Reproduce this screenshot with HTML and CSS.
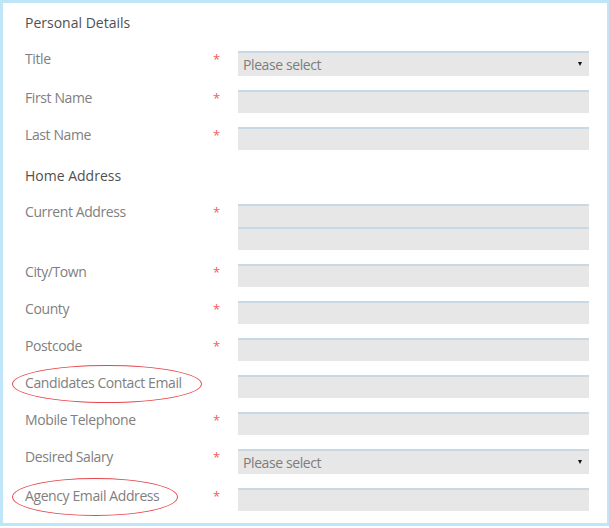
FILE: index.html
```html
<!DOCTYPE html>
<html lang="en">
<head>
    <meta charset="UTF-8">
    <meta name="viewport" content="width=device-width, initial-scale=1.0">
    <title>Candidate Registration</title>
    <link rel="stylesheet" href="styles.css">
</head>
<body>
<div class="panel">
    <h3 class="section_title">Personal Details</h3>
    <div class="field">
        <label class="field_label">Title</label>
        <span class="req">*</span>
        <div class="select_wrap">
            <select class="control">
                <option>Please select</option>
                <option>Mr</option>
                <option>Mrs</option>
                <option>Miss</option>
                <option>Ms</option>
            </select>
        </div>
    </div>
    <div class="field">
        <label class="field_label">First Name</label>
        <span class="req">*</span>
        <input type="text" class="control">
    </div>
    <div class="field">
        <label class="field_label">Last Name</label>
        <span class="req">*</span>
        <input type="text" class="control">
    </div>

    <h3 class="section_title second">Home Address</h3>
    <div class="field">
        <label class="field_label">Current Address</label>
        <span class="req">*</span>
        <div class="control_stack">
            <input type="text" class="control">
            <input type="text" class="control">
        </div>
    </div>
    <div class="field">
        <label class="field_label">City/Town</label>
        <span class="req">*</span>
        <input type="text" class="control">
    </div>
    <div class="field">
        <label class="field_label">County</label>
        <span class="req">*</span>
        <input type="text" class="control">
    </div>
    <div class="field">
        <label class="field_label">Postcode</label>
        <span class="req">*</span>
        <input type="text" class="control">
    </div>
    <div class="field">
        <label class="field_label circled">Candidates Contact Email<span class="ring ring_contact"></span></label>
        <span class="req"></span>
        <input type="email" class="control">
    </div>
    <div class="field">
        <label class="field_label">Mobile Telephone</label>
        <span class="req">*</span>
        <input type="tel" class="control">
    </div>
    <div class="field">
        <label class="field_label">Desired Salary</label>
        <span class="req">*</span>
        <div class="select_wrap">
            <select class="control">
                <option>Please select</option>
                <option>Under £20,000</option>
                <option>£20,000 - £30,000</option>
                <option>£30,000 - £40,000</option>
                <option>Over £40,000</option>
            </select>
        </div>
    </div>
    <div class="field last">
        <label class="field_label circled">Agency Email Address<span class="ring ring_agency"></span></label>
        <span class="req">*</span>
        <input type="email" class="control">
    </div>
</div>
</body>
</html>
```

FILE: styles.css
```css
body{
    margin: 0px;
    background: white;
    font-family: "Open Sans", "Liberation Sans", sans-serif;
}
.panel{
    box-sizing: border-box;
    width: 609px;
    height: 526px;
    border-style: solid;
    border-color: #bfe6f8;
    border-width: 3px 2px 3px 3px;
    padding: 10px 18px 0px 22px;
}
.section_title{
    margin: 0px 0px 18px 0px;
    font-size: 14px;
    line-height: 20px;
    font-weight: normal;
    color: #505050;
}
.section_title.second{
    margin-top: 16px;
    margin-bottom: 18px;
}
.field{
    display: flex;
    align-items: flex-start;
    margin-bottom: 14px;
}
.field.last{
    margin-bottom: 0px;
}
.field_label{
    width: 188px;
    flex-shrink: 0;
    margin-top: -1px;
    font-size: 14px;
    line-height: 18px;
    letter-spacing: -0.4px;
    color: #808080;
}
.circled{
    position: relative;
}
/* red pen rings drawn over two of the labels */
.ring{
    position: absolute;
    top: -9px;
    left: -13px;
    height: 38px;
    box-sizing: border-box;
    border: 1.6px solid #e6474c;
    border-radius: 50%;
}
.ring_contact{
    width: 190px;
}
.ring_agency{
    width: 166px;
}
.req{
    width: 25px;
    flex-shrink: 0;
    font-size: 13px;
    line-height: 16px;
    color: #f25b5b;
}
.control{
    display: block;
    box-sizing: border-box;
    width: 351px;
    height: 23px;
    margin: 0px;
    padding: 0px 5px;
    border: 0;
    border-top: 2px solid #c8d8e5;
    border-radius: 0;
    background: #e7e7e7;
    font-family: inherit;
    font-size: 14px;
    letter-spacing: -0.4px;
    color: #7d7d7d;
    outline: none;
}
.control_stack{
    display: flex;
    flex-direction: column;
}
.select_wrap{
    position: relative;
}
.select_wrap .control{
    height: 25px;
    -webkit-appearance: none;
    appearance: none;
}
.select_wrap::after{
    content: "";
    position: absolute;
    right: 7px;
    top: 11px;
    border-left: 2.5px solid transparent;
    border-right: 2.5px solid transparent;
    border-top: 4px solid #111;
    pointer-events: none;
}
```
